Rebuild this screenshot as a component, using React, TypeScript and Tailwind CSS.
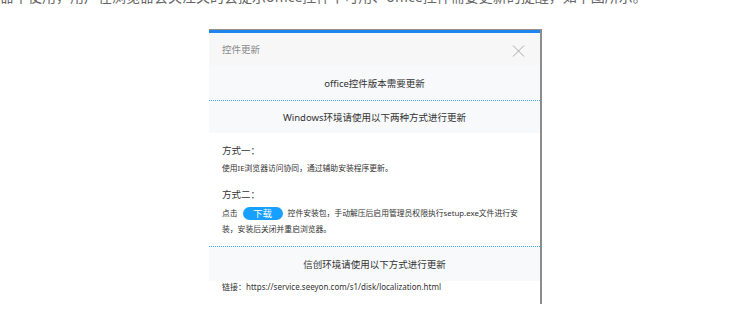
const font = { fontFamily: '"Noto Sans", "Noto Sans CJK SC", sans-serif' };

function CloseIcon() {
  return (
    <svg width="13" height="12" viewBox="0 0 13 12" fill="none" stroke="#a0a0a0" strokeWidth="0.9">
      <path d="M1 0.5 L12 11.5 M12 0.5 L1 11.5" />
    </svg>
  );
}

function DottedLine() {
  return <div className="h-px bg-[repeating-linear-gradient(90deg,#3ea8f0_0_1px,#ffffff_1px_2px)]" />;
}

export default function App() {
  return (
    <div className="w-[742px] h-[314px] bg-white overflow-hidden text-[#333]" style={font}>
      <div className="h-[5px] overflow-hidden">
        <p className="-mt-[12px] text-[14px] leading-[18px] text-[#666] whitespace-nowrap">
          器中使用，用户在浏览器会关注关的会提示office控件不可用、office控件需要更新的提醒，如下图所示。
        </p>
      </div>
      <div className="ml-[209px] mt-[24px] w-[333px] border-t border-[#9c8f86] border-r-2 border-r-[#8c8c8c]">
        <div className="h-[3px] bg-[#1c86ee]" />
        <div className="h-[32px] bg-[#f7f7f7] flex items-center justify-between pl-[13px] pr-[15px] pt-[3px]">
          <span className="text-[9.5px] text-[#8a8a8a]">控件更新</span>
          <CloseIcon />
        </div>
        <div className="h-[35px] bg-[#f8f9fb] flex items-center justify-center pt-[3px] text-[9.5px]">
          office控件版本需要更新
        </div>
        <DottedLine />
        <div className="h-[32px] bg-[#f8f9fb] flex items-center justify-center pt-[3px] text-[9.5px]">
          Windows环境请使用以下两种方式进行更新
        </div>
        <div className="bg-white px-[13px] pt-[11px] pb-[9px]">
          <div className="text-[9.5px] leading-[14px]">方式一：</div>
          <div className="text-[7.8px] leading-[14px] mt-[3px]">使用IE浏览器访问协同，通过辅助安装程序更新。</div>
          <div className="text-[9.5px] leading-[14px] mt-[13px]">方式二：</div>
          <div className="text-[7.8px] leading-[16px] mt-[3px]">
            点击
            <button className="mx-[5px] inline-flex items-center justify-center w-[40px] h-[13px] rounded-full bg-[#17a0ff] text-white text-[9.5px] align-middle">
              下载
            </button>
            控件安装包，手动解压后启用管理员权限执行setup.exe文件进行安装，安装后关闭并重启浏览器。
          </div>
        </div>
        <DottedLine />
        <div className="h-[34px] bg-[#f8f9fb] flex items-center justify-center pt-[3px] text-[9.5px]">
          信创环境请使用以下方式进行更新
        </div>
        <div className="h-[23px] px-[13px] text-[8px] leading-[12px]">
          链接：https://service.seeyon.com/s1/disk/localization.html
        </div>
      </div>
    </div>
  );
}
